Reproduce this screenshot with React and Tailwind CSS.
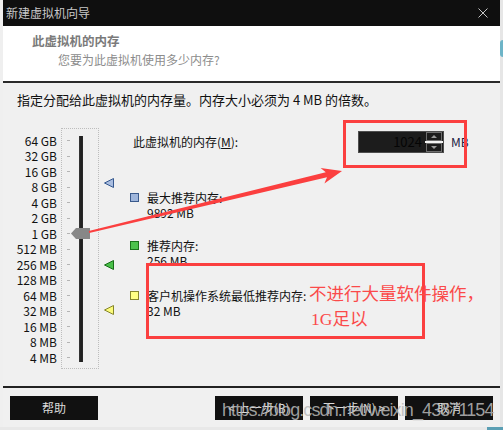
import React from 'react';

const SCALE = [
  '64 GB', '32 GB', '16 GB', '8 GB', '4 GB', '2 GB', '1 GB',
  '512 MB', '256 MB', '128 MB', '64 MB', '32 MB', '16 MB', '8 MB', '4 MB',
];

// markers beside the slider: top offset inside the scale box
const MARKERS = [
  { top: 49.5, fill: '#a9bde0', stroke: '#35588f' },
  { top: 131.5, fill: '#49c049', stroke: '#176d17' },
  { top: 177, fill: '#fbfb7a', stroke: '#85852a' },
];

const LEGEND = [
  { title: '最大推荐内存:', value: '9892 MB', fill: 'bg-[#9fb6dc]', border: 'border-[#3a5a8c]', gap: 'mt-[36.5px]' },
  { title: '推荐内存:', value: '256 MB', fill: 'bg-[#4cc24c]', border: 'border-[#1b731b]', gap: 'mt-[18px]' },
  { title: '客户机操作系统最低推荐内存:', value: '32 MB', fill: 'bg-[#ffff84]', border: 'border-[#86862e]', gap: 'mt-[20px]' },
];

function Marker({ top, fill, stroke }) {
  return (
    <svg className="absolute left-[5px]" style={{ top }} width="10" height="10" viewBox="0 0 10 10">
      <polygon points="0.5,5 9.5,0.5 9.5,9.5" fill={fill} stroke={stroke} strokeWidth="1" />
    </svg>
  );
}

function Spinner() {
  return (
    <div className="mr-[1px] flex w-[16px] flex-col">
      <div className="flex h-[9px] items-center justify-center border border-[#6e6e6e]">
        <svg width="6" height="3" viewBox="0 0 6 3"><polygon points="0,3 3,0 6,3" fill="#9a9a9a" /></svg>
      </div>
      <div className="-mx-[1px] h-[2px] bg-[#f4f4f4]" />
      <div className="flex h-[9px] items-center justify-center border border-[#6e6e6e]">
        <svg width="6" height="3" viewBox="0 0 6 3"><polygon points="0,0 6,0 3,3" fill="#9a9a9a" /></svg>
      </div>
    </div>
  );
}

function WizardButton({ children }) {
  return (
    <button className="flex h-[24px] w-[88px] items-center justify-center whitespace-nowrap bg-[#111] text-[12px] text-[#dcdcdc]">
      {children}
    </button>
  );
}

export default function App() {
  return (
    <div className="relative h-[430px] w-[503px] overflow-hidden bg-[#e3e5e6] font-['Noto_Sans_CJK_SC',sans-serif] text-[12px] text-[#111]">
      <div className="flex h-[427px]">
        <div className="w-[3px] bg-[#efefef]" />

        <div className="flex w-[497px] flex-col bg-[#f0f0f0]">
          {/* title bar */}
          <div className="flex h-[26px] items-center justify-between bg-[#0f0f0f] pl-[3px] pr-[12px]">
            <span className="text-[12px] leading-none text-[#c8c8c8]">新建虚拟机向导</span>
            <svg width="10" height="10" viewBox="0 0 10 10">
              <path d="M0.5 0.5 L9.5 9.5 M9.5 0.5 L0.5 9.5" stroke="#c4c4c4" strokeWidth="1" />
            </svg>
          </div>

          {/* header */}
          <div className="h-[57px] border-b-2 border-[#2a2a2a] bg-white pt-[7px]">
            <div className="pl-[29px] text-[12.5px] font-bold leading-[16px] text-[#7a7a7a]">此虚拟机的内存</div>
            <div className="mt-[3px] pl-[55px] text-[12px] leading-[16px] text-[#8c8c8c]">您要为此虚拟机使用多少内存?</div>
          </div>

          {/* body */}
          <div className="flex-1">
            <div className="pl-[14px] pt-[9px] text-[13px] leading-[16px]">
              指定分配给此虚拟机的内存量。内存大小必须为 4 MB 的倍数。
            </div>

            <div className="mt-[20px] flex">
              <div className="flex w-[54px] flex-col pt-[5.26px]">
                {SCALE.map((s) => (
                  <div key={s} className="flex h-[15.48px] items-center justify-end text-[12px] leading-none">
                    {s}
                  </div>
                ))}
              </div>

              <div className="relative ml-[4px] flex h-[241px] w-[38px] border border-dotted border-[#bdbdbd]">
                <div className="ml-[5px] flex w-[3px] flex-col pt-[4.26px]">
                  {SCALE.map((s) => (
                    <div key={s} className="flex h-[15.48px] items-center">
                      <div className="h-px w-full bg-[#b4b4b4]" />
                    </div>
                  ))}
                </div>
                <div className="mb-[6px] ml-[9px] mt-[7px] w-[4px] bg-gradient-to-r from-[#3a3a3a] via-[#1c1c1c] to-[#2c2c2c]" />
                <svg className="absolute left-[9px] top-[99px]" width="19" height="11" viewBox="0 0 19 11">
                  <polygon points="0,5.5 5,0 19,0 19,11 5,11" fill="#878787" />
                </svg>
              </div>

              <div className="relative w-[31px]">
                {MARKERS.map((m) => (
                  <Marker key={m.top} {...m} />
                ))}
              </div>

              <div className="flex flex-1 flex-col">
                <div className="mt-[3px] flex h-[22px] items-center">
                  <div className="w-[228px] pl-[3px]">
                    此虚拟机的内存(<span className="underline">M</span>):
                  </div>
                  <div className="flex h-[22px] w-[86px] items-center border border-[#4e4e4e] bg-[#1c1c1c]">
                    <div className="flex-1 pr-[4px] text-right text-[13px] text-[#050505]">1024</div>
                    <Spinner />
                  </div>
                  <div className="ml-[7px] text-[#1b1b40]">MB</div>
                </div>

                {LEGEND.map((l) => (
                  <div key={l.title} className={`${l.gap} flex items-start`}>
                    <div className={`mt-[3.5px] h-[9px] w-[9px] border ${l.fill} ${l.border}`} />
                    <div className="ml-[8px] leading-[15px]">
                      <div>{l.title}</div>
                      <div>{l.value}</div>
                    </div>
                  </div>
                ))}
              </div>
            </div>
          </div>

          {/* footer */}
          <div className="h-[41px] border-t-2 border-[#222] px-[7px] pt-[8px]">
            <div className="flex justify-between">
              <WizardButton>帮助</WizardButton>
              <div className="flex gap-[7px]">
                <WizardButton>&lt; 上一步(B)</WizardButton>
                <WizardButton>下一步(N) &gt;</WizardButton>
                <WizardButton>取消</WizardButton>
              </div>
            </div>
          </div>
        </div>

        <div className="flex w-[3px] flex-col bg-[#e6e6e6]">
          <div className="mt-[40px] h-[17px] rounded-l-full bg-[#6db4c7]" />
        </div>
      </div>
      <div className="flex h-[3px]">
        <div className="flex-1 bg-[#e8e8e8]" />
        <div className="w-[16px] bg-[#5b9fb4]" />
      </div>

      {/* red annotations */}
      <div className="pointer-events-none absolute left-[343px] top-[120px] h-[48px] w-[124px] border-[3px] border-[#fb3f3f]" />
      <div className="pointer-events-none absolute left-[146px] top-[263px] h-[76px] w-[279px] border-[3px] border-[#fb3f3f]" />
      <svg className="pointer-events-none absolute left-0 top-0" width="503" height="430">
        <polygon
          points="88.8,231 325.8,172.3 320.6,167.9 342,171 324.4,183.5 327,177.2 89.2,233"
          fill="#fb3f3f"
        />
      </svg>
      <div className="pointer-events-none absolute left-[309px] top-[282px] whitespace-nowrap font-['Liberation_Serif','Noto_Sans_CJK_SC',serif] text-[17.5px] leading-[25px] text-[#fb4a4a]">
        <div>不进行大量软件操作，</div>
        <div className="pl-[2px]">1G足以</div>
      </div>

      {/* blog watermark */}
      <div className="pointer-events-none absolute left-[222px] top-[398px] whitespace-nowrap font-['Liberation_Sans',sans-serif] text-[18px] leading-[24px] tracking-[-0.9px] text-[rgba(185,185,185,0.85)]">
        https://blog.csdn.net/weixin_43871154
      </div>
    </div>
  );
}
